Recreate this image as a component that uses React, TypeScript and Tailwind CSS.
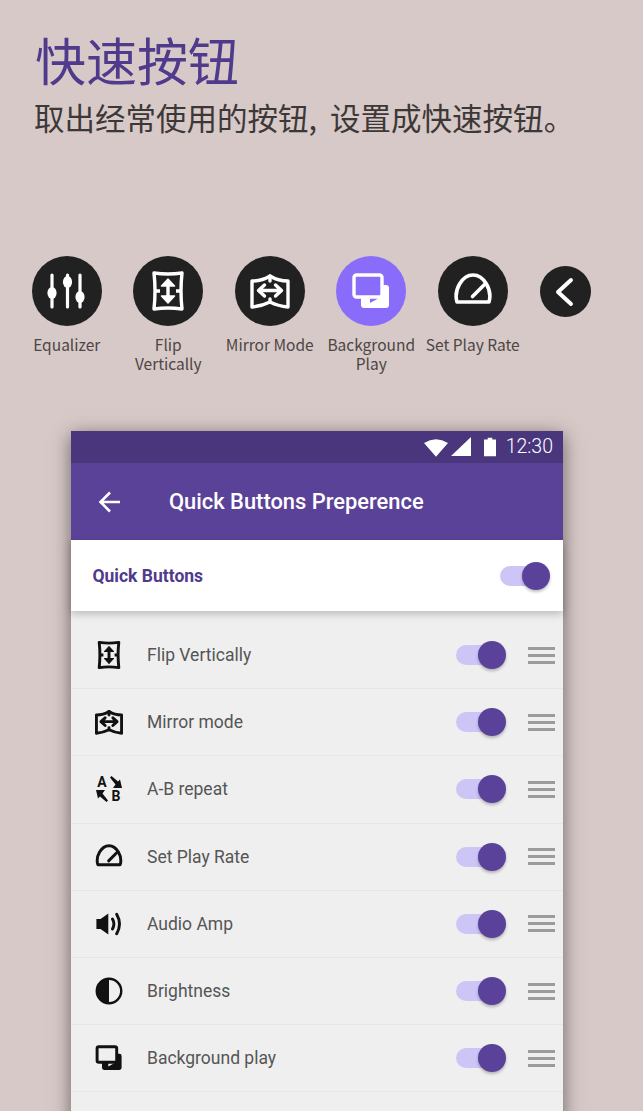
import React from "react";

type IconProps = { size?: number; bg?: string };

// the list icons are drawn smaller but just as heavy, so they get a thicker stroke
const weight = (size: number, big: number, small: number) => (size < 40 ? small : big);

const Equalizer: React.FC<IconProps> = ({ size = 40 }) => (
  <svg width={size} height={size} viewBox="0 0 40 40" fill="currentColor" stroke="currentColor">
    <path d="M5 4V36M20.5 4V36M33 4V36" strokeWidth="3.2" fill="none" strokeLinecap="round" />
    <ellipse cx="5" cy="22" rx="4.6" ry="6" stroke="none" />
    <ellipse cx="20.5" cy="11" rx="4.6" ry="6" stroke="none" />
    <ellipse cx="33" cy="26" rx="4.6" ry="6" stroke="none" />
  </svg>
);

const FlipVertical: React.FC<IconProps> = ({ size = 40 }) => (
  <svg width={size} height={size} viewBox="0 0 40 40" fill="none" stroke="currentColor" strokeWidth={weight(size, 3.4, 4.2)} strokeLinejoin="round">
    <path d="M6 2Q20 4 34 2Q32 20 34 38Q20 36 6 38Q8 20 6 2Z" />
    <path d="M8 20H12M32 20H28M20 12V28" />
    <path d="M13.5 15L20 8L26.5 15Z M13.5 25L20 32L26.5 25Z" fill="currentColor" strokeWidth="1.5" />
  </svg>
);

const Mirror: React.FC<IconProps> = ({ size = 40 }) => (
  <svg width={size} height={size} viewBox="0 0 40 40" fill="none" stroke="currentColor" strokeWidth={weight(size, 3.4, 4.2)} strokeLinejoin="round" strokeLinecap="round">
    <path d="M2 10Q12 10 20 5Q28 10 38 10V36Q28 35 20 31Q12 35 2 36Z" />
    <path d="M20 5V10M20 28V31" />
    <path d="M9 19.5H31M14.5 14L8.5 19.5L14.5 25M25.5 14L31.5 19.5L25.5 25" />
  </svg>
);

const Gauge: React.FC<IconProps> = ({ size = 40 }) => (
  <svg width={size} height={size} viewBox="0 0 40 40" fill="none" stroke="currentColor" strokeWidth={weight(size, 3.6, 4.2)} strokeLinejoin="round" strokeLinecap="round">
    <path d="M4 31C0.5 19 9 4 20 4C31 4 39.5 19 36 31Z" />
    <path d="M19.5 25.5L31 14" />
  </svg>
);

const BackgroundPlay: React.FC<IconProps> = ({ size = 40, bg = "#8a6cfb" }) => (
  <svg width={size} height={size} viewBox="0 0 40 40">
    <rect x="10" y="14" width="28" height="23" rx="3" fill="currentColor" />
    <path d="M19 26H30L19 32Z" fill={bg} />
    <rect x="3" y="4" width="28" height="22" rx="2.5" fill={bg} stroke="currentColor" strokeWidth={weight(size, 3.4, 4.2)} />
  </svg>
);

const Audio: React.FC<IconProps> = ({ size = 28 }) => (
  <svg width={size} height={size} viewBox="0 0 40 40" fill="none" stroke="currentColor" strokeWidth="4.2" strokeLinecap="round">
    <path d="M2 13H8L19 5V35L8 27H2Z" fill="currentColor" stroke="none" />
    <path d="M25 13Q29 20 25 27M31 6Q39 20 31 34" />
  </svg>
);

const Brightness: React.FC<IconProps> = ({ size = 28 }) => (
  <svg width={size} height={size} viewBox="0 0 40 40">
    <circle cx="20" cy="20" r="17.5" fill="none" stroke="currentColor" strokeWidth="3.4" />
    <path d="M20 2.5A17.5 17.5 0 0 0 20 37.5Z" fill="currentColor" />
  </svg>
);

const ABRepeat = () => (
  <div className="grid h-[28px] w-[28px] grid-cols-2 items-center justify-items-center font-['Roboto',sans-serif] text-[14px] leading-[14px] font-bold">
    <span>A</span>
    <svg width="12" height="12" viewBox="0 0 12 12" fill="currentColor">
      <path d="M0 1.5L1.5 0L8 5.5L10 3.5L12 12H3L5.5 8.5Z" />
    </svg>
    <svg width="12" height="12" viewBox="0 0 12 12" fill="currentColor">
      <path d="M12 10.5L10.5 12L4 6.5L2 8.5L0 0H9L6.5 3.5Z" />
    </svg>
    <span>B</span>
  </div>
);

const Toggle = () => (
  <div className="flex w-[50px] items-center">
    <div className="h-[20px] w-[40px] rounded-full bg-[#cdc5f6]" />
    <div className="-ml-[18px] h-[28px] w-[28px] rounded-full bg-[#5a419a] shadow-[0_2px_3px_rgba(0,0,0,0.25)]" />
  </div>
);

const Handle = () => (
  <div className="flex w-[27px] flex-col gap-[4px]">
    <div className="h-[3px] bg-[#9b9b9b]" />
    <div className="h-[3px] bg-[#9b9b9b]" />
    <div className="h-[3px] bg-[#9b9b9b]" />
  </div>
);

const quickButtons = [
  { label: "Equalizer", icon: <Equalizer /> },
  { label: "Flip\nVertically", icon: <FlipVertical /> },
  { label: "Mirror Mode", icon: <Mirror /> },
  { label: "Background\nPlay", icon: <BackgroundPlay />, active: true },
  { label: "Set Play Rate", icon: <Gauge /> },
];

const rows = [
  { label: "Flip Vertically", icon: <FlipVertical size={28} /> },
  { label: "Mirror mode", icon: <Mirror size={28} /> },
  { label: "A-B repeat", icon: <ABRepeat /> },
  { label: "Set Play Rate", icon: <Gauge size={28} /> },
  { label: "Audio Amp", icon: <Audio /> },
  { label: "Brightness", icon: <Brightness /> },
  { label: "Background play", icon: <BackgroundPlay size={28} bg="#efefef" /> },
  { label: "", icon: null },
];

export default function App() {
  return (
    <div className="h-[1111px] w-[643px] overflow-hidden bg-[#d7c9c7] font-['Noto_Sans_CJK_SC',sans-serif]">
      <header className="pt-[27px] pl-[35px]">
        <h1 className="text-[51px] leading-[64px] font-normal text-[#4f3a8c]">快速按钮</h1>
        <p className="mt-[4px] -ml-px text-[30.5px] leading-[44px] text-[#3c3837] [font-feature-settings:'palt']">
          取出经常使用的按钮,<span className="ml-[13px]">设置成快速按钮。</span>
        </p>
      </header>

      <div className="mt-[117px] flex pl-[16px]">
        {quickButtons.map((b) => (
          <div key={b.label} className="flex w-[101.5px] shrink-0 flex-col items-center">
            <div
              className={
                b.active
                  ? "flex h-[70px] w-[70px] items-center justify-center rounded-full bg-[#8a6cfb] text-white"
                  : "flex h-[70px] w-[70px] items-center justify-center rounded-full bg-[#212121] text-white"
              }
            >
              {b.icon}
            </div>
            <div className="mt-[9px] w-[100px] text-center text-[15.5px] leading-[19px] whitespace-pre text-[#4c4644]">{b.label}</div>
          </div>
        ))}
        <div className="mt-[10px] ml-[16px] flex h-[51px] w-[51px] shrink-0 items-center justify-center rounded-full bg-[#212121]">
          <svg width="24" height="30" viewBox="0 0 24 30" fill="none" stroke="white" strokeWidth="4" strokeLinecap="round" strokeLinejoin="round">
            <path d="M18 3L5 15L18 27" />
          </svg>
        </div>
      </div>

      <div className="mt-[58px] ml-[71px] w-[492px] shadow-[0_4px_18px_rgba(0,0,0,0.5)]">
        <div className="flex h-[32px] items-center justify-end gap-[3px] bg-[#49367d] pr-[10px] text-white">
          <svg width="24" height="19" viewBox="0 0 26 20" fill="white">
            <path d="M0 5Q13 -3 26 5L13 20Z" />
          </svg>
          <svg width="21" height="20" viewBox="0 0 21 20" fill="white">
            <path d="M20 0V19H0Z" />
          </svg>
          <svg className="ml-[9px]" width="12" height="20" viewBox="0 0 13 20" fill="white">
            <path d="M4 0H9V2H13V20H0V2H4Z" />
          </svg>
          <span className="ml-[7px] font-['Roboto',sans-serif] text-[19.5px] font-light">12:30</span>
        </div>
        <div className="flex h-[77px] items-center bg-[#5b4299] pl-[27px] text-white">
          <svg width="22" height="24" viewBox="0 0 22 24" fill="none" stroke="white" strokeWidth="2.6" strokeLinejoin="miter">
            <path d="M22 12H2.5M12 2.5L2.5 12L12 21.5" />
          </svg>
          <span className="ml-[49px] pt-[2px] font-['Roboto',sans-serif] text-[21.9px] font-medium">Quick Buttons Preperence</span>
        </div>
        <div className="relative flex h-[71px] items-center justify-between bg-white pr-[13px] pl-[21.5px] shadow-[0_3px_8px_rgba(0,0,0,0.22)]">
          <span className="pt-[2px] font-['Roboto',sans-serif] text-[17.5px] font-bold text-[#4f3a8c]">Quick Buttons</span>
          <Toggle />
        </div>
        <div className="bg-[#efefef] pt-[11px] font-['Roboto',sans-serif]">
          {rows.map((r, i) => (
            <div key={i} className="flex h-[67.2px] items-center border-b border-[#e6e6e6] pr-[8px] pl-[24px] text-[#111]">
              {r.icon && (
                <>
                  <div className="flex w-[28px] justify-center">{r.icon}</div>
                  <span className="ml-[24px] grow text-[17.5px] text-[#555]">{r.label}</span>
                  <Toggle />
                  <div className="ml-[22px]">
                    <Handle />
                  </div>
                </>
              )}
            </div>
          ))}
        </div>
      </div>
    </div>
  );
}
